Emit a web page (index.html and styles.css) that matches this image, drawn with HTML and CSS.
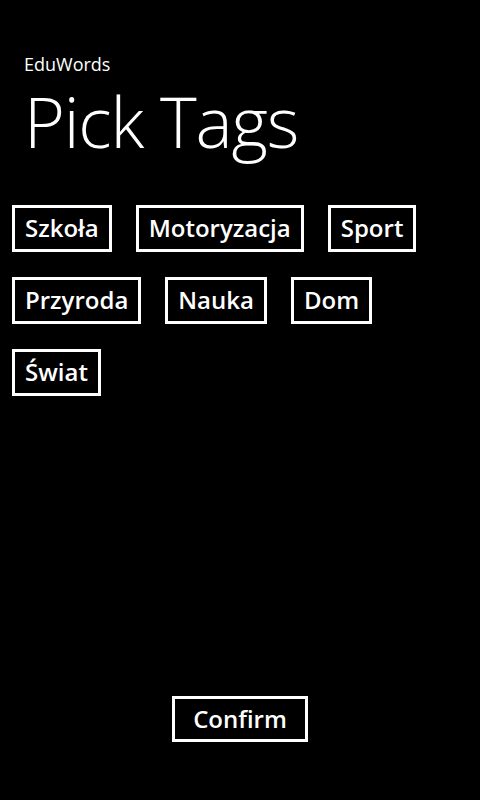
FILE: index.html
```html
<!DOCTYPE html>
<html lang="pl">
<head>
<meta charset="utf-8">
<title>Pick Tags</title>
<link rel="stylesheet" href="styles.css">
</head>
<body>
<main class="page">
  <header class="header">
    <div class="app-name">EduWords</div>
    <h1 class="page-title">Pick Tags</h1>
  </header>
  <section class="tags">
    <button class="tag">Szkoła</button>
    <button class="tag">Motoryzacja</button>
    <button class="tag">Sport</button>
    <button class="tag">Przyroda</button>
    <button class="tag">Nauka</button>
    <button class="tag">Dom</button>
    <button class="tag">Świat</button>
  </section>
  <footer class="footer">
    <button class="tag confirm">Confirm</button>
  </footer>
</main>
</body>
</html>
```
FILE: styles.css
```css
html, body {
  margin: 0;
  padding: 0;
  background: #000;
  color: #fff;
}
body {
  font-family: "Open Sans", "Noto Sans", sans-serif;
}
.page {
  height: 800px;
  display: flex;
  flex-direction: column;
  box-sizing: border-box;
}
.header {
  padding: 52px 0 0 24px;
}
.app-name {
  font-size: 18px;
  font-weight: 400;
  line-height: 24px;
}
.page-title {
  margin: 5px 0 0 0;
  font-size: 70px;
  font-weight: 300;
  line-height: 80px;
  letter-spacing: -1.2px;
}
.tags {
  display: flex;
  flex-wrap: wrap;
  column-gap: 24px;
  row-gap: 25px;
  padding: 44px 12px 0 12px;
}
.tag {
  background: #000;
  color: #fff;
  border: 3px solid #fff;
  height: 47px;
  padding: 0 10px 2px 10px;
  font-family: "Open Sans", "Noto Sans", sans-serif;
  font-size: 24px;
  font-weight: 600;
  display: inline-flex;
  align-items: center;
  justify-content: center;
  box-sizing: border-box;
  letter-spacing: 0;
}
.footer {
  margin-top: auto;
  display: flex;
  justify-content: center;
  padding-bottom: 58px;
}
.confirm {
  height: 46px;
  padding: 0 18px 2px 18px;
}
```
